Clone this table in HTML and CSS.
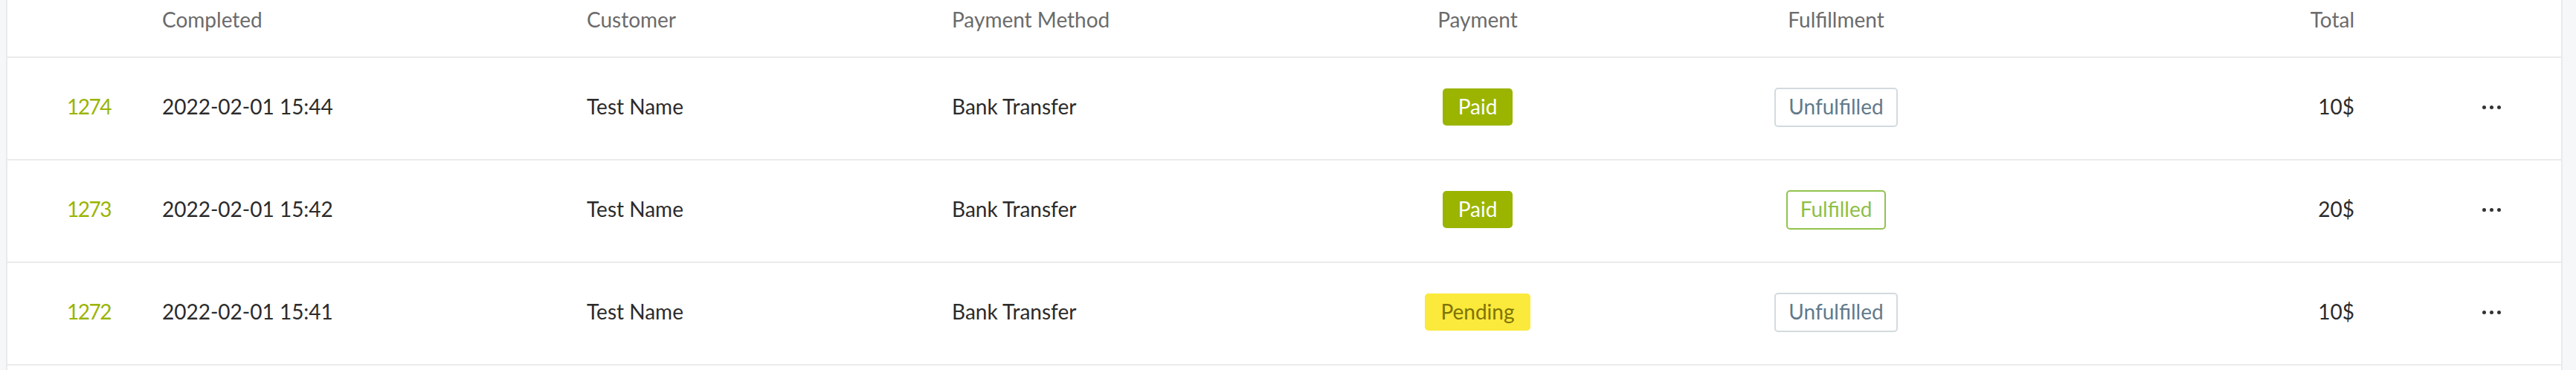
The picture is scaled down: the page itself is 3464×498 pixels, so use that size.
FILE: index.html
```html
<!DOCTYPE html>
<html lang="en">
<head>
<meta charset="utf-8">
<title>Orders</title>
<link rel="stylesheet" href="styles.css">
</head>
<body>
<div class="page">
  <div class="table">
    <div class="row head">
      <div class="cell id"></div>
      <div class="cell">Completed</div>
      <div class="cell">Customer</div>
      <div class="cell">Payment Method</div>
      <div class="cell center">Payment</div>
      <div class="cell center">Fulfillment</div>
      <div class="cell right">Total</div>
      <div class="cell"></div>
    </div>
    <div class="row">
      <div class="cell id">1274</div>
      <div class="cell">2022-02-01 15:44</div>
      <div class="cell">Test Name</div>
      <div class="cell">Bank Transfer</div>
      <div class="cell center"><span class="badge paid">Paid</span></div>
      <div class="cell center"><span class="badge outline unfulfilled">Unfulfilled</span></div>
      <div class="cell right">10$</div>
      <div class="cell actions"><span class="dots"><i></i><i></i><i></i></span></div>
    </div>
    <div class="row">
      <div class="cell id">1273</div>
      <div class="cell">2022-02-01 15:42</div>
      <div class="cell">Test Name</div>
      <div class="cell">Bank Transfer</div>
      <div class="cell center"><span class="badge paid">Paid</span></div>
      <div class="cell center"><span class="badge outline fulfilled">Fulfilled</span></div>
      <div class="cell right">20$</div>
      <div class="cell actions"><span class="dots"><i></i><i></i><i></i></span></div>
    </div>
    <div class="row">
      <div class="cell id">1272</div>
      <div class="cell">2022-02-01 15:41</div>
      <div class="cell">Test Name</div>
      <div class="cell">Bank Transfer</div>
      <div class="cell center"><span class="badge pending">Pending</span></div>
      <div class="cell center"><span class="badge outline unfulfilled">Unfulfilled</span></div>
      <div class="cell right">10$</div>
      <div class="cell actions"><span class="dots"><i></i><i></i><i></i></span></div>
    </div>
  </div>
</div>
</body>
</html>
```

FILE: styles.css
```css
html, body {
  margin: 0;
  padding: 0;
  background: #f6f7f9;
}
body {
  font-family: Lato, "Liberation Sans", sans-serif;
  font-size: 28px;
  color: #2b2b2b;
}
.page {
  padding: 0 18px 0 8px;
}
.table {
  background: #ffffff;
  min-height: 100vh;
  border-left: 2px solid #e9eaec;
  border-right: 2px solid #e9eaec;
}
.row {
  display: grid;
  grid-template-columns: 208px 571px 491px 480px 454px 510px 442px 1fr;
  height: 138px;
  padding-bottom: 4px;
  box-sizing: border-box;
  align-items: center;
  border-bottom: 2px solid #ebebeb;
}
.row.head {
  height: 78px;
  align-items: start;
  padding: 10px 0 0;
  color: #6b6b6b;
}
.cell {
  line-height: 1.2;
  white-space: nowrap;
}
.cell.id {
  padding-left: 80px;
  color: #9ab400;
  letter-spacing: -1.5px;
}
.cell.center {
  text-align: center;
}
.cell.right {
  text-align: right;
}
.badge {
  display: inline-flex;
  align-items: center;
  box-sizing: border-box;
  height: 50px;
  padding: 0 21px;
  border-radius: 5px;
  vertical-align: middle;
}
.badge.paid {
  background: #9ab400;
  color: #ffffff;
}
.badge.pending {
  background: #fbe93b;
  color: #7d7406;
}
.badge.outline {
  height: 53px;
  padding: 0 17px;
  border: 2px solid #d2d9de;
  background: #ffffff;
}
.badge.unfulfilled {
  border-color: #d3dade;
  color: #61798a;
}
.badge.fulfilled {
  border-color: #92c34f;
  color: #8dbf48;
}
.actions {
  padding-left: 172px;
}
.dots {
  display: inline-flex;
  gap: 5px;
  vertical-align: middle;
  margin-top: -6px;
}
.dots i {
  display: block;
  width: 5px;
  height: 5px;
  border-radius: 50%;
  background: #333333;
}
```
